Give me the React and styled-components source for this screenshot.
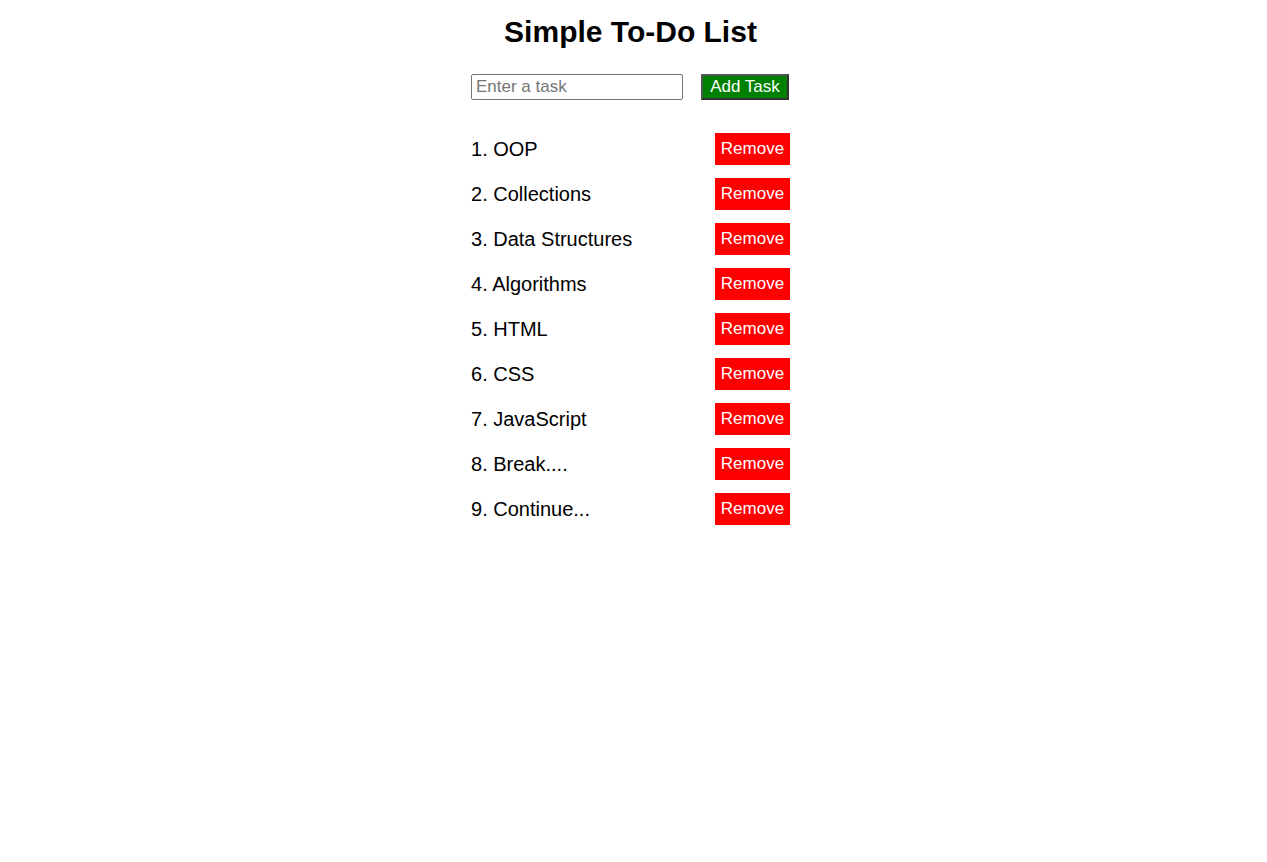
import { useState } from "react";
import styled, { createGlobalStyle } from "styled-components";

const GlobalStyle = createGlobalStyle`
  body {
    margin: 0;
    background: #fff;
    font-family: "Liberation Sans", Arial, sans-serif;
    color: #000;
  }
`;

const initialTasks = [
  "OOP",
  "Collections",
  "Data Structures",
  "Algorithms",
  "HTML",
  "CSS",
  "JavaScript",
  "Break....",
  "Continue...",
];

export default function App() {
  const [tasks, setTasks] = useState(initialTasks);
  const [text, setText] = useState("");

  const addTask = () => {
    if (!text.trim()) return;
    setTasks([...tasks, text.trim()]);
    setText("");
  };

  const removeTask = (index) => {
    setTasks(tasks.filter((_, i) => i !== index));
  };

  return (
    <Page>
      <GlobalStyle />
      <Container>
        <Title>Simple To-Do List</Title>
        <InputRow>
          <TaskInput
            placeholder="Enter a task"
            value={text}
            onChange={(e) => setText(e.target.value)}
          />
          <AddButton onClick={addTask}>Add Task</AddButton>
        </InputRow>
        <List>
          {tasks.map((task, i) => (
            <Item key={i}>
              <ItemText>
                {i + 1}. {task}
              </ItemText>
              <RemoveButton onClick={() => removeTask(i)}>Remove</RemoveButton>
            </Item>
          ))}
        </List>
      </Container>
    </Page>
  );
}

const Page = styled.div`
  display: flex;
  justify-content: center;
  padding-right: 6px;
`;

const Container = styled.div`
  width: 319px;
  display: flex;
  flex-direction: column;
`;

const Title = styled.h1`
  margin: 14px 0 0;
  font-size: 30px;
  font-weight: bold;
  text-align: center;
  line-height: 35px;
`;

const InputRow = styled.div`
  display: flex;
  gap: 18px;
  margin-top: 25px;
`;

const TaskInput = styled.input`
  width: 212px;
  height: 26px;
  box-sizing: border-box;
  border: 1px solid #767676;
  border-radius: 2px;
  padding: 1px 4px;
  font-family: "Liberation Sans", Arial, sans-serif;
  font-size: 17px;
  outline: none;

  &::placeholder {
    color: #757575;
  }
`;

const AddButton = styled.button`
  width: 88px;
  height: 26px;
  box-sizing: border-box;
  background: #008000;
  color: #fff;
  border: 2px solid #333;
  border-top-color: #555;
  border-left-color: #555;
  padding: 0;
  font-family: "Liberation Sans", Arial, sans-serif;
  font-size: 17px;
  cursor: pointer;
`;

const List = styled.ul`
  list-style: none;
  margin: 33px 0 0;
  padding: 0;
  display: flex;
  flex-direction: column;
  gap: 13px;
`;

const Item = styled.li`
  display: flex;
  justify-content: space-between;
  align-items: center;
  height: 32px;
`;

const ItemText = styled.span`
  font-size: 20px;
`;

const RemoveButton = styled.button`
  width: 75px;
  height: 32px;
  background: #ff0000;
  color: #fff;
  border: none;
  padding: 0;
  font-family: "Liberation Sans", Arial, sans-serif;
  font-size: 17px;
  cursor: pointer;
`;
